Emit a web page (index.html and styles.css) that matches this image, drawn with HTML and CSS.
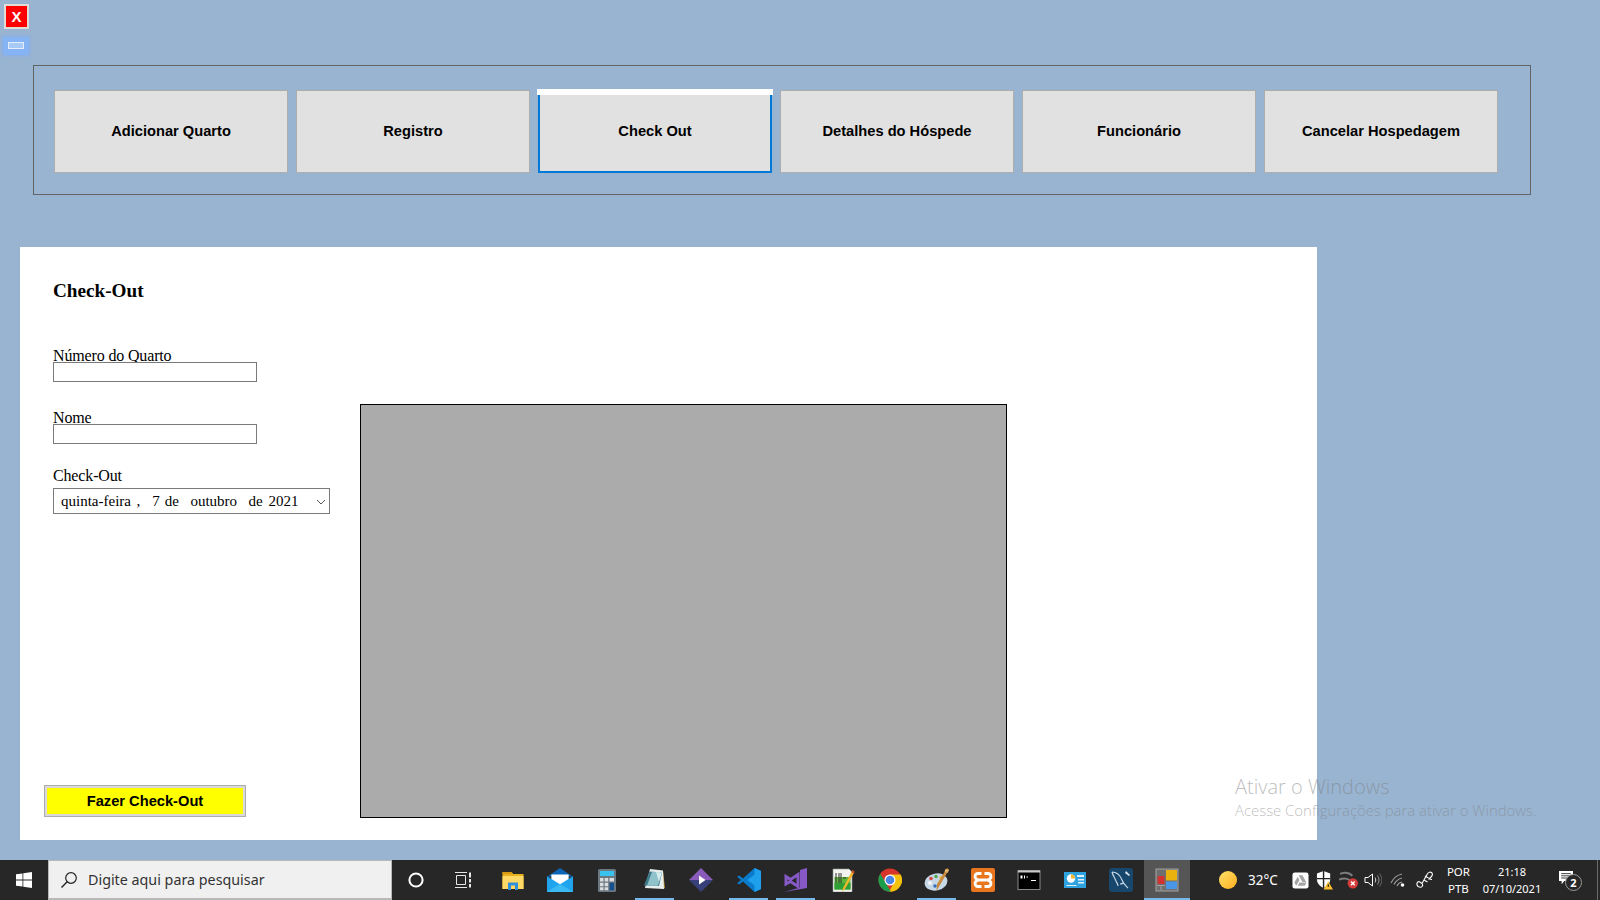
FILE: index.html
```html
<!DOCTYPE html>
<html lang="pt-BR">
<head>
<meta charset="utf-8">
<title>Check-Out</title>
<link rel="stylesheet" href="styles.css">
</head>
<body>
<main class="window">
  <div class="window-controls">
    <button class="close-btn" type="button">X</button>
    <button class="min-btn" type="button"><span class="min-glyph"></span></button>
  </div>
  <nav class="menu-panel">
    <button class="menu-btn" type="button">Adicionar Quarto</button>
    <button class="menu-btn" type="button">Registro</button>
    <button class="menu-btn menu-btn-active" type="button">Check Out</button>
    <button class="menu-btn" type="button">Detalhes do Hóspede</button>
    <button class="menu-btn" type="button">Funcionário</button>
    <button class="menu-btn" type="button">Cancelar Hospedagem</button>
  </nav>
  <section class="card">
    <div class="form-col">
      <h1 class="form-title">Check-Out</h1>
      <div class="field field-room">
        <label class="field-label">Número do Quarto</label>
        <div class="text-input"></div>
      </div>
      <div class="field field-name">
        <label class="field-label">Nome</label>
        <div class="text-input"></div>
      </div>
      <div class="field field-date">
        <label class="field-label field-label-date">Check-Out</label>
        <div class="date-input">
          <span class="date-text">
            <span>quinta-feira</span>
            <span class="date-comma">,</span>
            <span class="date-day">7</span>
            <span class="date-de">de</span>
            <span class="date-month">outubro</span>
            <span class="date-year">de 2021</span>
          </span>
          <svg class="date-arrow" viewBox="0 0 10 6" width="10" height="6"><path d="M1 1l4 4 4-4" fill="none" stroke="#555" stroke-width="1"/></svg>
        </div>
      </div>
      <button class="checkout-btn" type="button">Fazer Check-Out</button>
    </div>
    <div class="grid-view"></div>
  </section>
</main>

<div class="watermark">
  <div class="watermark-title">Ativar o Windows</div>
  <div class="watermark-sub">Acesse Configurações para ativar o Windows.</div>
</div>

<footer class="taskbar">
  <div class="tb-start">
    <svg viewBox="0 0 16 16" width="16" height="16"><path fill="#fff" d="M0 2.300l6.500-.9v6.200H0zM7.300 1.300L16 0v7.600H7.300zM0 8.400h6.500v6.200L0 13.700zM7.300 8.400H16V16l-8.700-1.200z"/></svg>
  </div>
  <div class="tb-search">
    <svg class="tb-search-icon" viewBox="0 0 18 18" width="18" height="18"><circle cx="11" cy="7" r="5.300" fill="none" stroke="#222" stroke-width="1.200"/><path d="M7.200 10.800L1.500 16.500" stroke="#222" stroke-width="1.400"/></svg>
    <span class="tb-search-text">Digite aqui para pesquisar</span>
  </div>
  <div class="tb-sys">
    <svg viewBox="0 0 18 18" width="18" height="18"><circle cx="9" cy="9" r="6.600" fill="none" stroke="#fff" stroke-width="2"/></svg>
  </div>
  <div class="tb-sys tb-sys-view">
    <svg viewBox="0 0 16 16" width="16" height="16"><path d="M0 .5h12M0 15.500h12M1.500 3.500h9v9h-9z" fill="none" stroke="#e8e8e8" stroke-width="1"/><path d="M14 .5h2v5h-2zM14 7h2v3.500h-2zM14 12h2v3.500h-2z" fill="#e8e8e8"/></svg>
  </div>
  <div class="tb-pins">
    <div class="tb-pin">
      <svg viewBox="0 0 24 24" width="24" height="24"><path fill="#e8b21f" d="M1.500 4h9l1.600 2h10.400v15h-21z"/><path fill="#ffd866" d="M1.500 8h21v13h-21z"/><path fill="#d89a14" d="M1.500 4h9l1.600 2H1.500z"/><path fill="#2f8fd8" d="M7 14.500h10V22h-3v-4.500h-4V22H7z"/></svg>
    </div>
    <div class="tb-pin">
      <svg viewBox="0 0 24 24" width="26" height="26"><path fill="#0c66b5" d="M12 1L0 9h24z"/><path fill="#fff" d="M4 7h16v6l-8 4-8-4z"/><path fill="#20a4ee" d="M0 8.500l12 7.500 12-7.500V23H0z"/><path fill="#45c3f7" d="M0 23l12-7.500L24 23z" opacity=".7"/></svg>
    </div>
    <div class="tb-pin">
      <svg viewBox="0 0 24 24" width="24" height="24"><rect x="3" y="1" width="18" height="23" rx="1.500" fill="#6c7780"/><rect x="5" y="3" width="14" height="5" fill="#39c2ee"/><path fill="#d9dde0" d="M5 10h3.500v3.500H5zM9.700 10h3.500v3.500H9.700zM5 14.700h3.500v3.500H5zM9.700 14.700h3.500v3.500H9.700zM5 19.300h3.500v3H5zM9.700 19.300h3.500v3H9.700z"/><rect x="14.500" y="14.700" width="4.500" height="7.600" fill="#17508f"/><rect x="14.500" y="10" width="4.500" height="3.500" fill="#d9dde0"/></svg>
    </div>
    <div class="tb-pin tb-pin-open">
      <svg viewBox="0 0 24 24" width="24" height="24"><path fill="#b8913a" d="M21 3l2 17-2.500 1z"/><path fill="#e8eeee" d="M8 1l13 1.500 1 18.500L3 20z"/><path fill="#3f7a88" d="M7.500 3.500L20 4.500l-3 13.500L2 17.500z"/><path fill="#8fc2ca" d="M10 3.800l10 .8-4 13.200H5z"/><path fill="#d6edf0" d="M14 4l6 .5-3 9z"/></svg>
    </div>
    <div class="tb-pin">
      <svg viewBox="0 0 24 24" width="24" height="24"><path fill="#8a5bb8" d="M12 0l12 12H0z"/><path fill="#38407a" d="M0 12h24L12 24z"/><path fill="#fff" d="M10 7.500l6.500 4.500-6.500 4.500z"/></svg>
    </div>
    <div class="tb-pin tb-pin-open">
      <svg viewBox="0 0 24 24" width="24" height="24"><path fill="#0a7acb" d="M17.500 0L24 3v18l-6.500 3L6 13.500 2.200 16.500 0 15.200 4 12 0 8.800 2.200 7.500 6 10.500z"/><path fill="#1ea0ee" d="M17.500 0L24 3v18l-6.500 3zM17.500 6.500L10.500 12l7 5.500z" fill-rule="evenodd"/></svg>
    </div>
    <div class="tb-pin tb-pin-open">
      <svg viewBox="0 0 24 24" width="24" height="24"><path fill="#8659c6" d="M16 2l7-2v20L0 24l16-4.500z"/><path fill="none" stroke="#8659c6" stroke-width="3" d="M2 8.500l4.500 3 7.500-5v12l-7.500-5L2 16z"/></svg>
    </div>
    <div class="tb-pin">
      <svg viewBox="0 0 24 24" width="24" height="24"><path fill="#f1f3ef" stroke="#98a09a" stroke-width=".6" d="M2 1h16l3 3v20H2z"/><rect x="3.500" y="9" width="16" height="12.500" fill="#5db53a"/><rect x="3.500" y="15" width="16" height="6.500" fill="#2f9e34"/><path d="M5 5v10M8 5v10M10 5v10M12 10h3" stroke="#333" stroke-width="1"/><path d="M21.500 2L12 20l-1 3.500 3-2.500 9.500-17z" fill="#efb52e"/><path d="M21.500 2l2 2-1 1.500-2-1.500z" fill="#c8402e"/></svg>
    </div>
    <div class="tb-pin">
      <svg viewBox="0 0 24 24" width="24" height="24"><circle cx="12" cy="12" r="11.500" fill="#d7352b"/><path fill="#f4c20d" d="M12 6.500h10.600A11.500 11.500 0 0 1 11 23.500L17 13z"/><path fill="#1b9e4b" d="M2.300 5.800L8 15.500l4.800 8A11.500 11.500 0 0 1 2.300 5.800z"/><circle cx="12" cy="12" r="5.500" fill="#fff"/><circle cx="12" cy="12" r="4.300" fill="#4a86e8"/></svg>
    </div>
    <div class="tb-pin tb-pin-open">
      <svg viewBox="0 0 26 26" width="26" height="26"><ellipse cx="12" cy="15" rx="11.500" ry="8.500" fill="#c6d8e8" transform="rotate(-12 12 15)"/><circle cx="6" cy="16" r="2" fill="#f4f7fa"/><circle cx="7" cy="11.500" r="1.800" fill="#d9493e"/><circle cx="12" cy="9.500" r="1.800" fill="#54a84b"/><circle cx="17" cy="10.500" r="1.600" fill="#e9b62e"/><circle cx="11" cy="19" r="1.800" fill="#3a6ec0"/><path d="M23 1l2 1.500L16 18l-3.500 6 .5-7z" fill="#c88a3c"/><path d="M21.500 2L25 3l-1.500 3-3-1.500z" fill="#e3b56a"/></svg>
    </div>
    <div class="tb-pin">
      <svg viewBox="0 0 24 24" width="24" height="24"><rect width="24" height="24" rx="2" fill="#e8761e"/><path fill="none" stroke="#fff" stroke-width="2.800" d="M10.500 5.500H7a3 3 0 0 0-1 5.800l2 .7-2 .7a3 3 0 0 0 1 5.800h3.500M13.500 5.500H17a3 3 0 0 1 1 5.800l-2 .7 2 .7a3 3 0 0 1-1 5.800h-3.500M9 12h6"/></svg>
    </div>
    <div class="tb-pin">
      <svg viewBox="0 0 24 24" width="24" height="24"><rect x="1" y="2.500" width="22" height="19" fill="#000" stroke="#8b8b8b" stroke-width="1"/><rect x="1" y="2.500" width="22" height="2" fill="#c8c8c8"/><path d="M3.500 7.500h2v3h-2zM7 7.500h1v3H7zM9.500 8.500h1.500v1H9.500zM14 12h5v1h-5z" fill="#fff"/></svg>
    </div>
    <div class="tb-pin">
      <svg viewBox="0 0 24 24" width="24" height="24"><rect x="1" y="4" width="22" height="16" fill="#2ea3e0"/><circle cx="8" cy="10.500" r="4.200" fill="#fff"/><path d="M8 10.500V6.300a4.200 4.200 0 0 1 4.200 4.200z" fill="#f2b632"/><path d="M14 7h7v2h-7zM15 11h6v1.500h-6zM15 14h6v1.500h-6zM3.500 17h10v1H3.500z" fill="#dff2fb"/></svg>
    </div>
    <div class="tb-pin">
      <svg viewBox="0 0 24 24" width="24" height="24"><rect width="24" height="24" rx="3" fill="#18476e"/><path fill="none" stroke="#c6d6e4" stroke-width="1.200" d="M3 4c5 0 8 3 10 8s4 6 6 8M3 4c1 4 3 6 4 9 .8 2 2 3 2 5M14 15c-1 1-2 1-3 1"/><path d="M17 3l4 4-1 1-4-3z" fill="#dbe5ee"/></svg>
    </div>
    <div class="tb-pin tb-pin-open tb-pin-current">
      <svg viewBox="0 0 24 24" width="24" height="24"><rect x="1" y="1" width="22" height="22" fill="#6f6f6f" stroke="#a3a3a3"/><rect x="11" y="2" width="11" height="10.500" fill="#eab20d"/><rect x="11" y="13.500" width="11" height="7.500" fill="#4a97e8"/><rect x="2.500" y="8" width="7" height="8" rx="1" fill="#d33431"/><path d="M2 17.500h8M6 17.500V22" stroke="#a3a3a3"/></svg>
    </div>
  </div>
  <div class="tb-tray">
    <div class="tb-weather">
      <span class="tb-sun"></span>
      <span class="tb-temp">32°C</span>
    </div>
    <div class="tb-tray-icons">
      <svg viewBox="0 0 18 18" width="17" height="17"><rect x=".5" y=".5" width="17" height="17" rx="2.500" fill="#fff"/><path fill="#a5a5a5" d="M7 3.500h4l4 7h-4zM6 5l2 3.500-3.500 6-2-3.500zM6 14.500l2-3.500h7.500l-2 3.500z"/></svg>
      <svg viewBox="0 0 18 20" width="17" height="19"><path fill="#fff" d="M8 0l7 2.500V9c0 4-3 7-7 9-4-2-7-5-7-9V2.500z"/><path d="M8 0v18M1 8h14" stroke="#222" stroke-width="1.500"/><path fill="#fbc02d" d="M13 11l5 8.500H8z"/><path d="M13 14v3" stroke="#222" stroke-width="1.200"/></svg>
      <svg viewBox="0 0 22 20" width="21" height="19"><path d="M1 3c5-2 10-1 13 2M0 9c5-2 8-1.500 11 .5 2 1.500 5 1 7 2" fill="none" stroke="#7c7c7c" stroke-width="2"/><circle cx="14.500" cy="13" r="5.500" fill="#d73a3a"/><path d="M12.500 11l4 4M16.500 11l-4 4" stroke="#fff" stroke-width="1.500"/></svg>
      <svg viewBox="0 0 18 18" width="18" height="18"><path d="M1 6.500h3L8.500 3v12L4 11.500H1z" fill="none" stroke="#fff" stroke-width="1"/><path d="M11 6.500c1 1.500 1 3.500 0 5" fill="none" stroke="#ddd" stroke-width="1"/><path d="M13.500 4.500c2 3 2 6 0 9" fill="none" stroke="#999" stroke-width="1"/><path d="M15.500 2.500c3 4 3 9 0 13" fill="none" stroke="#666" stroke-width="1"/></svg>
      <svg viewBox="0 0 18 18" width="18" height="18"><path d="M1 12c3-6 6-8 11-9M4 13.500c2-4 4-5.500 8-6.500M7 15c1-2.500 2.500-3.500 5-4" fill="none" stroke="#9a9a9a" stroke-width="1.200"/><circle cx="12.500" cy="14" r="1.800" fill="#fff"/></svg>
      <svg viewBox="0 0 18 18" width="18" height="18"><path d="M2 15.500c-2-2-1-5 1-5l3 2 5-9c1-2 3-3 4.500-2s1 3-.5 4.500l-2 2 3 .5M6 12.500c1.500 2 0 5-4 3M9 5l3.500 2M8 9l3.500 2" fill="none" stroke="#fff" stroke-width="1.100"/></svg>
    </div>
    <div class="tb-lang"><span>POR</span><span>PTB</span></div>
    <div class="tb-clock"><span>21:18</span><span>07/10/2021</span></div>
    <div class="tb-notify">
      <svg class="tb-notify-icon" viewBox="0 0 16 16" width="16" height="14"><path fill="#fff" d="M0 0h16v11.500H6L3 15v-3.500H0z"/><path d="M2.500 3h11M2.500 5.500h11M2.500 8h7" stroke="#272727" stroke-width="1"/></svg>
      <span class="tb-notify-badge">2</span>
    </div>
    <div class="tb-desktop"></div>
  </div>
</footer>
</body>
</html>
```

FILE: styles.css
```css
* {
  box-sizing: border-box;
}

html,
body {
  margin: 0;
  padding: 0;
}

body {
  position: relative;
  width: 1600px;
  height: 900px;
  overflow: hidden;
  display: flex;
  flex-direction: column;
  background: #99b4d1;
  font-family: "Liberation Sans", Arial, sans-serif;
}

button {
  padding: 0;
  margin: 0;
  cursor: default;
}

.window {
  flex: none;
  height: 860px;
  padding-top: 4px;
}

/* window controls */
.window-controls {
  display: flex;
  flex-direction: column;
  align-items: flex-start;
  height: 61px;
  padding-left: 4px;
}

.close-btn {
  width: 25px;
  height: 25px;
  background: #ff0000;
  border: 2px solid #e1ddd6;
  outline: none;
  color: #fff;
  font: 700 15px/20px "Liberation Sans", Arial, sans-serif;
  text-align: center;
}

.min-btn {
  display: flex;
  align-items: center;
  justify-content: center;
  width: 26px;
  height: 18px;
  margin-top: 8px;
  margin-left: -1px;
  padding-bottom: 2px;
  background: #86b3f3;
  border: none;
  box-shadow: 0 0 3px 1px #88aee6;
}

.min-glyph {
  display: block;
  width: 16px;
  height: 7px;
  background: #a8caf5;
  border: 1px solid #e4eefb;
}

/* menu */
.menu-panel {
  display: flex;
  align-items: flex-start;
  gap: 8px;
  width: 1498px;
  height: 130px;
  margin-left: 33px;
  padding: 24px 0 0 20px;
  border: 1px solid #646464;
}

.menu-btn {
  flex: none;
  width: 234px;
  height: 83px;
  background: #e1e1e1;
  border: 1px solid #adadad;
  color: #000;
  font: 700 14.67px/1 "Liberation Sans", Arial, sans-serif;
  text-align: center;
}

.menu-btn-active {
  position: relative;
  border: 2px solid #0078d7;
}

.menu-btn-active::before {
  content: "";
  position: absolute;
  left: -3px;
  right: -3px;
  top: -3px;
  height: 6px;
  background: #fff;
}

/* card */
.card {
  display: flex;
  width: 1297px;
  height: 593px;
  margin: 52px 0 0 20px;
  background: #fff;
}

.form-col {
  flex: none;
  display: flex;
  flex-direction: column;
  align-items: flex-start;
  width: 340px;
  padding: 33px 0 23px 33px;
}

.form-title {
  margin: 0;
  color: #000;
  font: 700 19.2px/22px "Liberation Serif", "Times New Roman", serif;
}

.field {
  display: flex;
  flex-direction: column;
  align-items: flex-start;
}

.field-room {
  margin-top: 42px;
}

.field-name {
  margin-top: 24px;
}

.field-date {
  margin-top: 22px;
}

.field-label {
  display: block;
  height: 18px;
  color: #000;
  font: 400 16px/24px "Liberation Serif", "Times New Roman", serif;
  letter-spacing: -0.15px;
}

.field-label-date {
  line-height: 20px;
}

.text-input {
  position: relative;
  width: 204px;
  height: 20px;
  background: #fff;
  border: 1px solid #7a7a7a;
}

.date-input {
  display: flex;
  align-items: center;
  justify-content: space-between;
  width: 277px;
  height: 26px;
  margin-top: 4px;
  padding: 0 3px 0 7px;
  background: #fff;
  border: 1px solid #7a7a7a;
}

.date-text {
  display: flex;
  color: #000;
  font: 400 15px/1 "Liberation Serif", "Times New Roman", serif;
  white-space: nowrap;
}

.date-comma {
  margin-left: 5.5px;
}

.date-day {
  margin-left: 12px;
}

.date-de {
  margin-left: 5px;
}

.date-month {
  margin-left: 11.5px;
}

.date-year {
  margin-left: 11.5px;
  word-spacing: 2px;
}

.date-arrow {
  flex: none;
  margin-top: 2px;
}

.checkout-btn {
  width: 202px;
  height: 32px;
  margin-top: auto;
  margin-left: -9px;
  background: #ffff00;
  border: 1px solid #adadad;
  box-shadow: inset 0 0 0 2px #d9d9d9;
  color: #000;
  font: 700 14.67px/1 "Liberation Sans", Arial, sans-serif;
}

.grid-view {
  flex: none;
  width: 647px;
  height: 414px;
  margin-top: 157px;
  background: #ababab;
  border: 1px solid #000;
}

/* activation watermark */
.watermark {
  position: absolute;
  left: 1235px;
  top: 773px;
  color: rgba(125, 125, 125, 0.52);
  font-family: "Open Sans", sans-serif;
  font-weight: 300;
  white-space: nowrap;
}

.watermark-title {
  font-size: 20px;
  line-height: 28px;
}

.watermark-sub {
  font-size: 14.9px;
  line-height: 18px;
}

/* taskbar */
.taskbar {
  flex: none;
  display: flex;
  align-items: stretch;
  width: 1600px;
  height: 40px;
  background: #272727;
  color: #fff;
  font-family: "Noto Sans", sans-serif;
}

.tb-start {
  flex: none;
  display: flex;
  align-items: center;
  justify-content: center;
  width: 48px;
}

.tb-search {
  flex: none;
  display: flex;
  align-items: center;
  width: 344px;
  padding-left: 11px;
  background: #f0f0f0;
  border: 1px solid #b8b8b8;
  border-bottom-width: 2px;
}

.tb-search-icon {
  flex: none;
}

.tb-search-text {
  margin-left: 10px;
  color: #333;
  font-size: 14.3px;
  white-space: nowrap;
}

.tb-sys {
  flex: none;
  display: flex;
  align-items: center;
  justify-content: center;
  width: 48px;
}

.tb-sys-view {
  padding-right: 2px;
}

.tb-pins {
  flex: none;
  display: grid;
  grid-template-columns: repeat(10, 47.1px) repeat(5, 46px);
  margin-left: 1.5px;
}

.tb-pin {
  position: relative;
  display: flex;
  align-items: center;
  justify-content: center;
}

.tb-pin-open::after {
  content: "";
  position: absolute;
  left: 4px;
  right: 4px;
  bottom: 0;
  height: 2px;
  background: #76b9ed;
}

.tb-pin-current {
  background: #555;
}

.tb-pin-current::after {
  left: 0;
  right: 0;
}

.tb-tray {
  flex: none;
  display: flex;
  align-items: stretch;
  width: 410px;
  margin-left: -0.5px;
}

.tb-weather {
  flex: none;
  display: flex;
  align-items: center;
  width: 99px;
  padding-left: 29px;
}

.tb-sun {
  flex: none;
  width: 18px;
  height: 18px;
  border-radius: 50%;
  background: linear-gradient(135deg, #ffe06a, #ffb01f);
}

.tb-temp {
  margin-left: 11px;
  font-size: 13.5px;
  white-space: nowrap;
}

.tb-tray-icons {
  flex: none;
  display: grid;
  grid-template-columns: 24px 24px 26px 20px 32px 20px;
  align-items: center;
  justify-items: center;
}

.tb-lang,
.tb-clock {
  flex: none;
  display: flex;
  flex-direction: column;
  align-items: center;
  justify-content: center;
  font-size: 11.5px;
  line-height: 17px;
  white-space: nowrap;
}

.tb-lang {
  width: 47px;
}

.tb-clock {
  width: 60px;
  font-size: 11px;
}

.tb-notify {
  position: relative;
  flex: none;
  width: 53px;
}

.tb-notify-icon {
  position: absolute;
  left: 16px;
  top: 11px;
}

.tb-notify-badge {
  position: absolute;
  left: 23px;
  top: 14px;
  width: 17px;
  height: 17px;
  border: 1px solid #999;
  border-radius: 50%;
  background: #272727;
  font-size: 11px;
  font-weight: 700;
  line-height: 15px;
  text-align: center;
}

.tb-desktop {
  flex: none;
  width: 5px;
  margin-left: 2px;
  border-left: 1px solid #6a6a6a;
}
```
